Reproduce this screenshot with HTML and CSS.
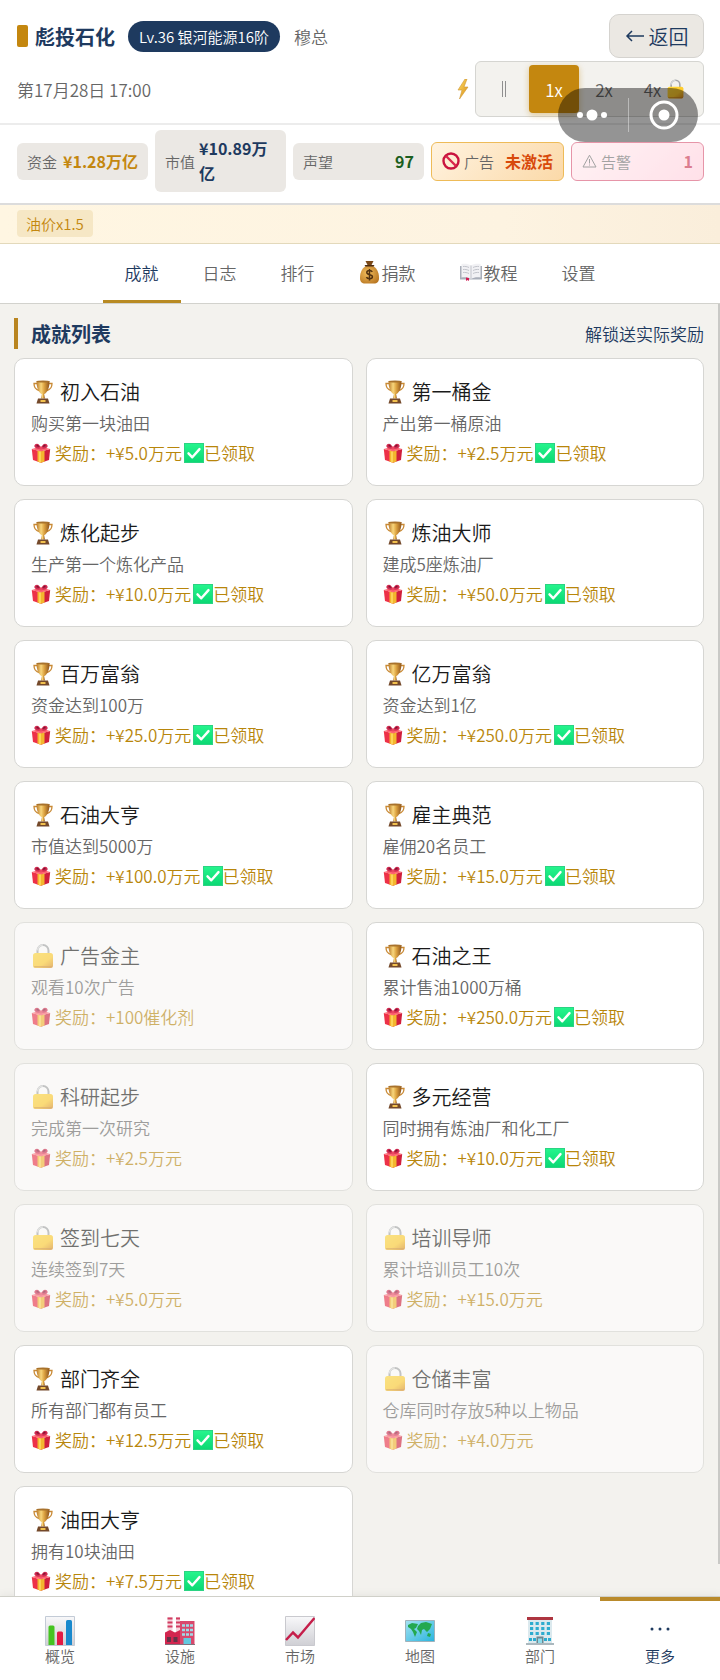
FILE: index.html
```
<!DOCTYPE html>
<html lang="zh-CN">
<head>
    <meta charset="UTF-8">
    <meta name="viewport" content="width=device-width, initial-scale=1.0">
    <title>彪投石化</title>
    <link rel="stylesheet" href="styles.css">
</head>
<body>
    <!-- Shared icons -->
    <svg class="sprite" width="0" height="0" aria-hidden="true">
        <defs>
            <linearGradient id="gold" x1="0" x2="1" y1="0" y2="0">
                <stop offset="0" stop-color="#b9792a"/>
                <stop offset=".35" stop-color="#f8d67c"/>
                <stop offset=".6" stop-color="#dca240"/>
                <stop offset="1" stop-color="#8d531c"/>
            </linearGradient>
            <linearGradient id="lockBody" x1="0" x2="1" y1="0" y2="1">
                <stop offset="0" stop-color="#ffd83a"/>
                <stop offset=".6" stop-color="#ffcb2b"/>
                <stop offset="1" stop-color="#d98a1c"/>
            </linearGradient>
            <linearGradient id="green" x1="0" x2="0" y1="0" y2="1">
                <stop offset="0" stop-color="#25f58d"/>
                <stop offset="1" stop-color="#0bd873"/>
            </linearGradient>
            <linearGradient id="bolt" x1="0" x2="1" y1="0" y2="1">
                <stop offset="0" stop-color="#ffe066"/>
                <stop offset="1" stop-color="#d88a14"/>
            </linearGradient>
            <linearGradient id="paper" x1="0" x2="0" y1="0" y2="1">
                <stop offset="0" stop-color="#f8f8fa"/>
                <stop offset="1" stop-color="#cfcfd4"/>
            </linearGradient>
            <linearGradient id="sea" x1="0" x2="1" y1="0" y2="1">
                <stop offset="0" stop-color="#a6e2f2"/>
                <stop offset="1" stop-color="#28b4de"/>
            </linearGradient>
            <radialGradient id="bag" cx=".4" cy=".4" r=".7">
                <stop offset="0" stop-color="#f2bd5c"/>
                <stop offset="1" stop-color="#b97722"/>
            </radialGradient>
        </defs>
        <symbol id="trophy" viewBox="0 0 24 24">
            <path d="M6 3.500H3c0 4 1.200 6 5 7M18 3.500h3c0 4-1.200 6-5 7" fill="none" stroke="#c98a35" stroke-width="1.300"/>
            <path d="M5.500 1h13c0 6.500-1.800 11-5 13h-3c-3.200-2-5-6.500-5-13z" fill="url(#gold)"/>
            <ellipse cx="12" cy="1.500" rx="6.500" ry="1" fill="#a8722c"/>
            <path d="M11 13.500h2l1 5h-4z" fill="url(#gold)"/>
            <path d="M7 18.500h10l1.500 5h-13z" fill="#74492a"/>
            <path d="M9.500 20h5v2h-5z" fill="#f2c14e"/>
        </symbol>
        <symbol id="lock" viewBox="0 0 24 24">
            <path d="M6.500 11V6.500a5.500 5.500 0 0 1 11 0V11" fill="none" stroke="#a3a5a8" stroke-width="2"/>
            <path d="M6.500 6.500A5.500 5.500 0 0 1 12 1" fill="none" stroke="#d6d8da" stroke-width="1.500"/>
            <rect x="2" y="9" width="20" height="15" rx="2.500" fill="url(#lockBody)"/>
            <path d="M3.500 22.800h17" stroke="#c77e22" stroke-width="1.500" stroke-linecap="round" opacity=".6"/>
        </symbol>
        <symbol id="gift" viewBox="0 0 20 20">
            <path d="M.8 6 10 8.500v11.300l-8-2.800z" fill="#ed3148"/>
            <path d="m19.200 6-9.200 2.500v11.300l8-2.800z" fill="#d01f3c"/>
            <path d="M.8 6 10 3.500 19.200 6 10 8.500z" fill="#ff6370"/>
            <path d="m6.500 7.600 3.500 1 3.500-1v11l-3.500 1.200-3.500-1.200z" fill="#f3b62e"/>
            <path d="M9 8.500v11" stroke="#ffdc66" stroke-width="1.500"/>
            <path d="M10 5.500C4 6.500 2 3.500 4.200 1.200 6.500-.3 9 1.500 10 5.500zM10 5.500c6 1 8-2 5.800-4.300C13.500-.3 11 1.500 10 5.500z" fill="#d02a50"/>
            <path d="M8.500 3.700C5.500 4 4.800 3 5.700 2c1-.6 2 .3 2.800 1.700zM11.500 3.700c3 .3 3.700-.7 2.800-1.700-1-.6-2 .3-2.800 1.700z" fill="#811333"/>
            <circle cx="10" cy="5" r="1.600" fill="#eb4962"/>
        </symbol>
        <symbol id="check" viewBox="0 0 20 20">
            <rect x=".5" y=".5" width="19" height="19" fill="url(#green)" stroke="#2bd383"/>
            <path d="m4.500 10.300 3.800 4 7.200-8.200" fill="none" stroke="#fff" stroke-width="2.400" stroke-linecap="round" stroke-linejoin="round"/>
        </symbol>
    </svg>

    <header class="header">
        <div class="header-row">
            <div class="brand">
                <span class="brand-mark"></span>
                <h1>彪投石化</h1>
                <span class="level">Lv.36 银河能源16阶</span>
                <span class="owner">穆总</span>
            </div>
            <button class="back" type="button">
                <svg width="20" height="14" viewBox="0 0 20 14" aria-hidden="true"><path d="M19 7H2M7 2 2 7l5 5" fill="none" stroke="currentColor" stroke-width="1.500"/></svg>
                返回
            </button>
        </div>
        <div class="header-row">
            <time class="clock">第17月28日 17:00</time>
            <div class="speed">
                <svg width="12" height="20" viewBox="0 0 12 20" aria-hidden="true"><path d="M8 0 1 11h4L2.500 20 11 8H7l3-8z" fill="url(#bolt)" stroke="#cf9838" stroke-width=".6"/></svg>
                <div class="speed-group">
                    <button type="button" aria-label="暂停"><svg width="6" height="16" viewBox="0 0 6 16"><path d="M1.500 0v16M4.500 0v16" stroke="#8f8f8f" stroke-width="1"/></svg></button>
                    <button type="button" class="active">1x</button>
                    <button type="button">2x</button>
                    <button type="button" class="wide">4x <svg width="19" height="20"><use href="#lock"/></svg></button>
                </div>
            </div>
        </div>
        <div class="capsule">
            <svg width="30" height="12" viewBox="0 0 30 12"><circle cx="3" cy="6" r="3" fill="#fff"/><circle cx="15" cy="6" r="5.500" fill="#fff"/><circle cx="27" cy="6" r="3" fill="#fff"/></svg>
            <span class="capsule-line"></span>
            <svg width="30" height="30" viewBox="0 0 30 30"><circle cx="15" cy="15" r="13" fill="none" stroke="#fff" stroke-width="3"/><circle cx="15" cy="15" r="5.500" fill="#fff"/></svg>
        </div>
    </header>

    <section class="stats">
        <div class="stat"><span>资金</span><strong class="gold">¥1.28万亿</strong></div>
        <div class="stat"><span>市值</span><strong class="navy">¥10.89万亿</strong></div>
        <div class="stat"><span>声望</span><strong class="green">97</strong></div>
        <div class="stat ad">
            <span>
                <svg width="18" height="18" viewBox="0 0 18 18" aria-hidden="true"><circle cx="9" cy="9" r="7.500" fill="none" stroke="#c9143f" stroke-width="2.400"/><path d="m4 4 10 10" stroke="#d9274c" stroke-width="2.400"/></svg>
                广告
            </span>
            <strong class="orange">未激活</strong>
        </div>
        <div class="stat alert">
            <span>
                <svg width="15" height="14" viewBox="0 0 15 14" aria-hidden="true"><path d="M7.500 1.200 14 13H1zM7.500 5v4.500M7.500 10.500v1" fill="none" stroke="currentColor" stroke-linejoin="round"/></svg>
                告警
            </span>
            <strong class="red">1</strong>
        </div>
    </section>

    <div class="events"><span class="event">油价x1.5</span></div>

    <nav class="tabs">
        <button type="button" class="active">成就</button>
        <button type="button">日志</button>
        <button type="button">排行</button>
        <button type="button">
            <svg width="21" height="23" viewBox="0 0 21 23" aria-hidden="true"><path d="M7 5C2 8 1 13 1 17c0 4 2 5.500 5 5.500h9c3 0 5-1.500 5-5.500 0-4-1-9-6-12z" fill="url(#bag)"/><path d="M6.500 0h8l-2 4h-4z" fill="#7a4817"/><path d="M6.500 4.800h8" stroke="#4d2c10" stroke-width="1.600" stroke-linecap="round"/><path d="M13.300 10.800c-.6-1-1.600-1.300-2.800-1.300-1.500 0-2.700.7-2.700 2 0 3 5.600 1.300 5.600 4.200 0 1.300-1.300 2-2.800 2-1.400 0-2.600-.4-3.200-1.500M10.500 8v11.500" fill="none" stroke="#50300f" stroke-width="1.500"/></svg>捐款
        </button>
        <button type="button">
            <svg width="22" height="18" viewBox="0 0 22 18" aria-hidden="true"><path d="M0 3h22v13.500H0z" fill="#a9aeb9"/><path d="M1.500 1C5 .4 8.500.8 11 2.500 13.500.8 17 .4 20.500 1v13.500c-3.500-.5-7-.1-9.500 1.500-2.500-1.600-6-2-9.500-1.500z" fill="#f1f1f4"/><path d="M11 2.500V16M13 4.500c2-1 4-1.200 6-1M13 7.500c2-1 4-1.200 6-1M13 10.500c2-1 4-1.200 6-1M3 3.500c2-.2 4 0 6 1M3 6.500c2-.2 4 0 6 1M3 9.500c2-.2 4 0 6 1" fill="none" stroke="#c2c4cb"/><path d="m6 14.500 3 .5v3l-1.500-1L6 18z" fill="#d31b54"/></svg>教程
        </button>
        <button type="button">设置</button>
    </nav>

    <main class="content">
        <div class="section-head">
            <h2>成就列表</h2>
            <span>解锁送实际奖励</span>
        </div>
        <div class="grid">
            <article class="card">
                <h3><svg class="icon"><use href="#trophy"/></svg>初入石油</h3>
                <p>购买第一块油田</p>
                <div class="reward"><svg class="gift"><use href="#gift"/></svg>奖励：+¥5.0万元 <svg class="check"><use href="#check"/></svg>已领取</div>
            </article>
            <article class="card">
                <h3><svg class="icon"><use href="#trophy"/></svg>第一桶金</h3>
                <p>产出第一桶原油</p>
                <div class="reward"><svg class="gift"><use href="#gift"/></svg>奖励：+¥2.5万元 <svg class="check"><use href="#check"/></svg>已领取</div>
            </article>
            <article class="card">
                <h3><svg class="icon"><use href="#trophy"/></svg>炼化起步</h3>
                <p>生产第一个炼化产品</p>
                <div class="reward"><svg class="gift"><use href="#gift"/></svg>奖励：+¥10.0万元 <svg class="check"><use href="#check"/></svg>已领取</div>
            </article>
            <article class="card">
                <h3><svg class="icon"><use href="#trophy"/></svg>炼油大师</h3>
                <p>建成5座炼油厂</p>
                <div class="reward"><svg class="gift"><use href="#gift"/></svg>奖励：+¥50.0万元 <svg class="check"><use href="#check"/></svg>已领取</div>
            </article>
            <article class="card">
                <h3><svg class="icon"><use href="#trophy"/></svg>百万富翁</h3>
                <p>资金达到100万</p>
                <div class="reward"><svg class="gift"><use href="#gift"/></svg>奖励：+¥25.0万元 <svg class="check"><use href="#check"/></svg>已领取</div>
            </article>
            <article class="card">
                <h3><svg class="icon"><use href="#trophy"/></svg>亿万富翁</h3>
                <p>资金达到1亿</p>
                <div class="reward"><svg class="gift"><use href="#gift"/></svg>奖励：+¥250.0万元 <svg class="check"><use href="#check"/></svg>已领取</div>
            </article>
            <article class="card">
                <h3><svg class="icon"><use href="#trophy"/></svg>石油大亨</h3>
                <p>市值达到5000万</p>
                <div class="reward"><svg class="gift"><use href="#gift"/></svg>奖励：+¥100.0万元 <svg class="check"><use href="#check"/></svg>已领取</div>
            </article>
            <article class="card">
                <h3><svg class="icon"><use href="#trophy"/></svg>雇主典范</h3>
                <p>雇佣20名员工</p>
                <div class="reward"><svg class="gift"><use href="#gift"/></svg>奖励：+¥15.0万元 <svg class="check"><use href="#check"/></svg>已领取</div>
            </article>
            <article class="card locked">
                <h3><svg class="icon"><use href="#lock"/></svg>广告金主</h3>
                <p>观看10次广告</p>
                <div class="reward"><svg class="gift"><use href="#gift"/></svg>奖励：+100催化剂</div>
            </article>
            <article class="card">
                <h3><svg class="icon"><use href="#trophy"/></svg>石油之王</h3>
                <p>累计售油1000万桶</p>
                <div class="reward"><svg class="gift"><use href="#gift"/></svg>奖励：+¥250.0万元 <svg class="check"><use href="#check"/></svg>已领取</div>
            </article>
            <article class="card locked">
                <h3><svg class="icon"><use href="#lock"/></svg>科研起步</h3>
                <p>完成第一次研究</p>
                <div class="reward"><svg class="gift"><use href="#gift"/></svg>奖励：+¥2.5万元</div>
            </article>
            <article class="card">
                <h3><svg class="icon"><use href="#trophy"/></svg>多元经营</h3>
                <p>同时拥有炼油厂和化工厂</p>
                <div class="reward"><svg class="gift"><use href="#gift"/></svg>奖励：+¥10.0万元 <svg class="check"><use href="#check"/></svg>已领取</div>
            </article>
            <article class="card locked">
                <h3><svg class="icon"><use href="#lock"/></svg>签到七天</h3>
                <p>连续签到7天</p>
                <div class="reward"><svg class="gift"><use href="#gift"/></svg>奖励：+¥5.0万元</div>
            </article>
            <article class="card locked">
                <h3><svg class="icon"><use href="#lock"/></svg>培训导师</h3>
                <p>累计培训员工10次</p>
                <div class="reward"><svg class="gift"><use href="#gift"/></svg>奖励：+¥15.0万元</div>
            </article>
            <article class="card">
                <h3><svg class="icon"><use href="#trophy"/></svg>部门齐全</h3>
                <p>所有部门都有员工</p>
                <div class="reward"><svg class="gift"><use href="#gift"/></svg>奖励：+¥12.5万元 <svg class="check"><use href="#check"/></svg>已领取</div>
            </article>
            <article class="card locked">
                <h3><svg class="icon"><use href="#lock"/></svg>仓储丰富</h3>
                <p>仓库同时存放5种以上物品</p>
                <div class="reward"><svg class="gift"><use href="#gift"/></svg>奖励：+¥4.0万元</div>
            </article>
            <article class="card">
                <h3><svg class="icon"><use href="#trophy"/></svg>油田大亨</h3>
                <p>拥有10块油田</p>
                <div class="reward"><svg class="gift"><use href="#gift"/></svg>奖励：+¥7.5万元 <svg class="check"><use href="#check"/></svg>已领取</div>
            </article>
        </div>
        <span class="scroll-thumb"></span>
    </main>

    <nav class="bottom-nav">
        <button type="button">
            <svg viewBox="0 0 30 30"><path d="M.5.500h29v29H.5z" fill="url(#paper)" stroke="#c3cbd6"/><path d="M3.500 29V11a1.500 1.500 0 0 1 1.500-1.500h3A1.500 1.500 0 0 1 9.500 11v18z" fill="#45c421"/><path d="M12 29V17a1.500 1.500 0 0 1 1.500-1.500h3A1.500 1.500 0 0 1 18 17v12z" fill="#e21b45"/><path d="M21 29V5.500A1.500 1.500 0 0 1 22.500 4h3A1.500 1.500 0 0 1 27 5.500V29z" fill="#1989cd"/></svg>
            概览
        </button>
        <button type="button">
            <svg viewBox="0 0 30 30"><path d="M2.500 16V1h5v15zM11 16V1h4v15z" fill="#f5d5dd"/><path d="M2.500 2.500h5M2.500 6.500h5M2.500 10.500h5M11 2.500h4M11 6.500h4M11 10.500h4" stroke="#d23c61" stroke-width="2"/><path d="M0 16.500 5 14l5 2.500 5-2.500V28H0z" fill="#d2264f"/><path d="M15 5h14.500v23H15z" fill="#d9486c"/><path d="M17 9.500h11M17 14h11M17 18.500h11" stroke="#9edbe8" stroke-width="2.500" stroke-dasharray="3 1"/><path d="M2 21h4v5H2zM8.500 21h4v5h-4z" fill="#623448"/><path d="M18.500 22h7.500v6h-7.500z" fill="#62c9df"/><path d="M0 28.500h30" stroke="#83707c"/></svg>
            设施
        </button>
        <button type="button">
            <svg viewBox="0 0 30 30"><path d="M.5.500h29v29H.5z" fill="url(#paper)" stroke="#c9c9ce"/><path d="m1 24 7-7.500 5 5L29.500 2" fill="none" stroke="#c51e4a" stroke-width="2.500"/></svg>
            市场
        </button>
        <button type="button">
            <svg viewBox="0 0 30 30"><path d="M.5 4.500h29v21H.5z" fill="url(#sea)" stroke="#a0b2bb"/><path d="m3 9 4-2 6 1-2 4-2 1 3 3-2 5-2-5-2-3-3-2zM13 10l3-3 5-1 6 2-2 5-3 3-3-3-2 1-1 5-2-4-2-2zM23 17l3 1-1 3-3-1z" fill="#24a84f"/></svg>
            地图
        </button>
        <button type="button">
            <svg viewBox="0 0 30 30"><path d="M3 4h24v23H3z" fill="#dbe9ee"/><path d="M2 1h26v3H2z" fill="#ae3540"/><path d="M5 7.500h20M5 12.500h20M5 17.500h20" stroke="#2daccf" stroke-width="3" stroke-dasharray="3.200 2.400"/><path d="M4 23.500h7M19 23.500h7" stroke="#2daccf" stroke-width="3" stroke-dasharray="3 1"/><path d="M11.500 20.500h7V27h-7z" fill="#6b8791"/><path d="M13 22.500h4V27h-4z" fill="#8fdcec"/><path d="M1 28h28" stroke="#8fa1a8" stroke-width="1.500"/></svg>
            部门
        </button>
        <button type="button" class="active">
            <svg viewBox="0 0 30 30"><circle cx="7" cy="13" r="1.500" fill="currentColor"/><circle cx="15" cy="13" r="1.500" fill="currentColor"/><circle cx="23" cy="13" r="1.500" fill="currentColor"/></svg>
            更多
        </button>
    </nav>
</body>
</html>
```
FILE: styles.css
```
* {
    box-sizing: border-box;
}

body {
    font-family: "Noto Sans CJK SC", sans-serif;
    margin: 0;
    height: 100vh;
    display: flex;
    flex-direction: column;
    background-color: #f3f2ee;
    color: #666;
    font-size: 17px;
    font-weight: 350;
    overflow: hidden;
}

h1, h2, h3, p {
    margin: 0;
}

button {
    font: inherit;
    color: inherit;
    background: none;
    border: none;
    padding: 0;
    cursor: pointer;
}

svg {
    flex: none;
}

.sprite {
    position: absolute;
}

.header {
    position: relative;
    background-color: #fff;
    padding: 14px 16px 6px 17px;
    border-bottom: 2px solid #ececec;
}

.header-row {
    display: flex;
    justify-content: space-between;
    align-items: center;
}

.header-row + .header-row {
    margin-top: 3px;
}

.brand {
    display: flex;
    align-items: center;
}

.brand-mark {
    width: 11px;
    height: 22px;
    border-radius: 2px;
    background-color: #c4870f;
    margin-right: 7px;
}

h1 {
    font-size: 20px;
    font-weight: 700;
    color: #1e3a5f;
}

.level {
    margin: 0 14px 0 13px;
    padding: 0 11px;
    border-radius: 16px;
    background-color: #1e3a5f;
    color: #fff;
    font-size: 15px;
    line-height: 31px;
}

.back {
    display: flex;
    align-items: center;
    justify-content: center;
    gap: 4px;
    width: 95px;
    height: 44px;
    border: 1px solid #d5d3cf;
    border-radius: 10px;
    background-color: #ebe8e3;
    color: #1e3a5f;
    font-size: 20px;
}

.speed {
    display: flex;
    align-items: center;
    gap: 6px;
}

.speed-group {
    display: flex;
    width: 229px;
    height: 56px;
    padding: 3px;
    border: 1px solid #d5d5d1;
    border-radius: 6px;
    background-color: #f3f2ee;
}

.speed-group button {
    display: flex;
    align-items: center;
    justify-content: center;
    gap: 5px;
    width: 50px;
    border-radius: 4px;
}

.speed-group .wide {
    flex: 1;
}

.speed-group .active {
    background-color: #c4870f;
    color: #fff;
    box-shadow: 0 2px 6px rgba(196, 135, 15, 0.4);
}

/* floating mini-program menu */
.capsule {
    position: absolute;
    top: 88px;
    right: 22px;
    z-index: 2;
    display: flex;
    align-items: center;
    justify-content: space-between;
    width: 140px;
    height: 54px;
    padding: 0 19px;
    border-radius: 27px;
    background-color: rgba(0, 0, 0, 0.42);
}

.capsule-line {
    width: 1px;
    height: 34px;
    background-color: rgba(255, 255, 255, 0.4);
}

.stats {
    display: flex;
    align-items: center;
    gap: 7px;
    padding: 5px 16px 11px 17px;
    background-color: #fff;
    border-bottom: 2px solid #dcdcdc;
}

.stat {
    flex: 1 1 0;
    min-width: 0;
    display: flex;
    align-items: center;
    justify-content: space-between;
    gap: 4px;
    padding: 6px 10px;
    border-radius: 6px;
    background-color: #ebe8e4;
    line-height: 25px;
}

.stat span {
    display: flex;
    align-items: center;
    flex: none;
    gap: 4px;
    font-size: 15px;
}

.stat strong {
    font-size: 16px;
    font-weight: 700;
}

.gold {
    color: #c4870f;
}

.navy {
    color: #1e3a5f;
}

.green {
    color: #1b5e20;
}

.orange {
    color: #d84a0b;
}

.red {
    color: #c62845;
}

.ad {
    flex-basis: 3px;
    border: 1px solid #eebb58;
    background: linear-gradient(135deg, #fff3e0, #fbd9a8);
}

.alert {
    flex-basis: 3px;
    border: 1px solid #d64f70;
    background: linear-gradient(135deg, #ffebee, #ffcddb);
    opacity: 0.6;
}

.events {
    display: flex;
    padding: 5px 17px 6px;
    background: linear-gradient(90deg, #fff6e2, #fdf3e1 70%, #faeedb);
    border-bottom: 1px solid #e3d9bb;
}

.event {
    padding: 0 9px;
    border-radius: 4px;
    background-color: #f6e7c5;
    color: #c4870f;
    font-size: 15px;
    line-height: 27px;
}

.tabs {
    display: flex;
    justify-content: center;
    background-color: #fff;
    border-bottom: 1px solid #d2d2cd;
}

.tabs button {
    display: flex;
    align-items: center;
    gap: 2px;
    height: 59px;
    padding: 0 22px;
    border-bottom: 3px solid transparent;
}

.tabs .active {
    border-bottom-color: #b88a22;
    color: #1e3a5f;
}

.content {
    position: relative;
    flex: 1;
    min-height: 0;
    overflow: hidden;
    padding: 14px 16px 0 14px;
}

.section-head {
    display: flex;
    justify-content: space-between;
    align-items: center;
    margin-bottom: 9px;
    color: #1e3a5f;
}

.section-head h2 {
    padding-left: 13px;
    border-left: 4px solid #b98520;
    font-size: 20px;
    line-height: 31px;
    font-weight: 700;
}

.grid {
    display: grid;
    grid-template-columns: 1fr 1fr;
    gap: 13px;
}

.card {
    padding: 17px 16px 18px;
    border: 1px solid #d6d6d3;
    border-radius: 10px;
    background-color: #fff;
}

.locked {
    opacity: 0.6;
}

.card h3 {
    display: flex;
    align-items: center;
    gap: 5px;
    color: #1a1a1a;
    font-size: 20px;
    line-height: 32px;
    font-weight: 350;
}

.card p {
    line-height: 30px;
}

.reward {
    display: flex;
    align-items: center;
    line-height: 29px;
    color: #b8860b;
}

.icon {
    width: 24px;
    height: 24px;
}

.gift {
    width: 20px;
    height: 20px;
    margin-right: 4px;
}

.check {
    width: 20px;
    height: 20px;
    margin-left: 2px;
}

.scroll-thumb {
    position: absolute;
    top: 0;
    right: 0;
    bottom: 32px;
    width: 2px;
    background-color: #c9c9c6;
}

.bottom-nav {
    display: grid;
    grid-template-columns: repeat(6, 1fr);
    background-color: #fff;
    border-top: 1px solid #d0d0c9;
    box-shadow: 0 -2px 8px rgba(0, 0, 0, 0.05);
}

.bottom-nav button {
    display: flex;
    flex-direction: column;
    align-items: center;
    padding: 15px 0 14px;
    border-top: 4px solid transparent;
    font-size: 15px;
    line-height: 20px;
}

.bottom-nav .active {
    border-top-color: #b98a2b;
    color: #1e3a5f;
}

.bottom-nav svg {
    width: 30px;
    height: 30px;
}
```
